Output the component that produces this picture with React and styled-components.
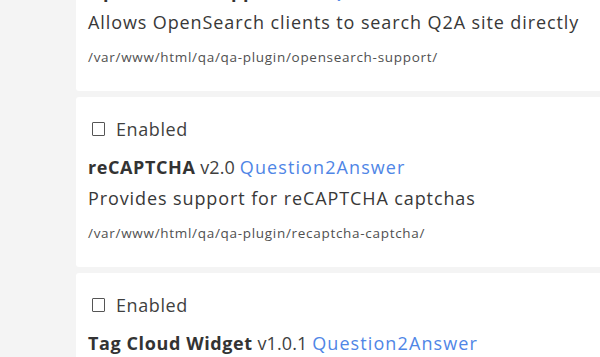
import React from 'react'
import styled, { createGlobalStyle } from 'styled-components'

const GlobalStyle = createGlobalStyle`
  html, body {
    margin: 0;
    padding: 0;
    background: #f4f4f4;
    overflow: hidden;
  }
  body {
    font-family: 'Open Sans', 'Noto Sans', sans-serif;
    color: #3a3a3a;
  }
`

const Page = styled.div`
  width: 600px;
  height: 357px;
  overflow: hidden;
`

// the list is scrolled: the first card's top lies above the window
const List = styled.div`
  display: flex;
  flex-direction: column;
  gap: 6px;
  margin-top: -79px;
  padding-left: 76px;
`

const Card = styled.section`
  background: #ffffff;
  border-radius: 3px 0 0 3px;
  padding: 18px 12px 24px;
`

const EnableRow = styled.label`
  display: flex;
  align-items: center;
  gap: 11px;
  height: 28px;
  font-size: 18px;
  letter-spacing: 0.6px;
  color: #3f3f3f;
  padding-left: 4px;
`

const Box = styled.input`
  appearance: none;
  margin: 0;
  width: 13px;
  height: 14px;
  border: 1.5px solid #555;
  border-radius: 1px;
  background: #fff;
  box-sizing: border-box;
`

const Title = styled.div`
  margin-top: 10px;
  height: 28px;
  line-height: 28px;
  font-size: 18px;
  letter-spacing: 0.1px;
  white-space: nowrap;
  color: #3f3f3f;
`

const Name = styled.strong`
  font-weight: 700;
  letter-spacing: 0.6px;
  color: #333;
`

const Author = styled.a`
  color: #4f86e6;
  letter-spacing: 1.1px;
  text-decoration: none;
`

const Desc = styled.div`
  margin-top: 3px;
  height: 28px;
  line-height: 28px;
  font-size: 18px;
  letter-spacing: 0.9px;
  white-space: nowrap;
  color: #383838;
`

const Path = styled.div`
  margin-top: 11px;
  height: 20px;
  line-height: 20px;
  font-size: 13.5px;
  letter-spacing: 0.7px;
  color: #505050;
  white-space: nowrap;
`

const plugins = [
  {
    name: 'OpenSearch Support',
    version: 'v1.1',
    desc: 'Allows OpenSearch clients to search Q2A site directly',
    path: '/var/www/html/qa/qa-plugin/opensearch-support/'
  },
  {
    name: 'reCAPTCHA',
    version: 'v2.0',
    desc: 'Provides support for reCAPTCHA captchas',
    path: '/var/www/html/qa/qa-plugin/recaptcha-captcha/'
  },
  {
    name: 'Tag Cloud Widget',
    version: 'v1.0.1',
    desc: 'Provides a list of tags with size indicating popularity',
    path: '/var/www/html/qa/qa-plugin/tag-cloud-widget/'
  }
]

export default function App() {
  return (
    <Page>
      <GlobalStyle />
      <List>
        {plugins.map(p => (
          <Card key={p.name}>
            <EnableRow>
              <Box type="checkbox" />
              <span>Enabled</span>
            </EnableRow>
            <Title>
              <Name>{p.name}</Name> {p.version}{' '}
              <Author href="#">Question2Answer</Author>
            </Title>
            <Desc>{p.desc}</Desc>
            <Path>{p.path}</Path>
          </Card>
        ))}
      </List>
    </Page>
  )
}
